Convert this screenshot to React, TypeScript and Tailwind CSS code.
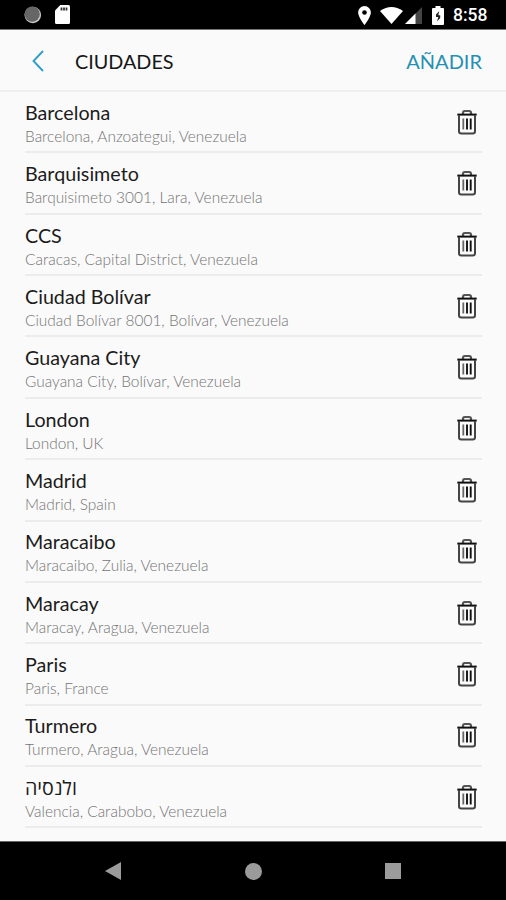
import React from 'react';

interface City {
  name: string;
  region: string;
}

const cities: City[] = [
  { name: 'Barcelona', region: 'Barcelona, Anzoategui, Venezuela' },
  { name: 'Barquisimeto', region: 'Barquisimeto 3001, Lara, Venezuela' },
  { name: 'CCS', region: 'Caracas, Capital District, Venezuela' },
  { name: 'Ciudad Bolívar', region: 'Ciudad Bolívar 8001, Bolívar, Venezuela' },
  { name: 'Guayana City', region: 'Guayana City, Bolívar, Venezuela' },
  { name: 'London', region: 'London, UK' },
  { name: 'Madrid', region: 'Madrid, Spain' },
  { name: 'Maracaibo', region: 'Maracaibo, Zulia, Venezuela' },
  { name: 'Maracay', region: 'Maracay, Aragua, Venezuela' },
  { name: 'Paris', region: 'Paris, France' },
  { name: 'Turmero', region: 'Turmero, Aragua, Venezuela' },
  { name: 'ולנסיה', region: 'Valencia, Carabobo, Venezuela' },
];

const TrashIcon: React.FC = () => (
  <svg width="20" height="26" viewBox="0 0 20 26" fill="none" stroke="#222">
    <path d="M6 5V3.800q0-1.800 1.800-1.800h4.400q1.800 0 1.800 1.800V5" strokeWidth="2.200" stroke="#555" />
    <path d="M0.300 5.600H19.700" strokeWidth="2" stroke="#111" />
    <path d="M2 6v16.200q0 2.300 2.300 2.300h11.400q2.300 0 2.300-2.300V6" strokeWidth="2" stroke="#444" />
    <path d="M6.300 9.500v11" strokeWidth="1.800" stroke="#666" />
    <path d="M10 9.500v11M13.700 9.500v11" strokeWidth="1.900" stroke="#111" />
  </svg>
);

const StatusBar: React.FC = () => (
  <div className="flex h-[30px] items-center justify-between border-b border-[#777] bg-black pl-6 pr-[18px]">
    <div className="flex items-center gap-[13px]">
      <svg width="18" height="18" viewBox="0 0 18 18">
        <circle cx="8.800" cy="9" r="8.300" fill="#c8c8c8" />
        <circle cx="8.200" cy="8.200" r="7.600" fill="#666" />
      </svg>
      <svg width="15" height="19" viewBox="0 0 15 19">
        <path d="M5.300 0h8.200Q15 0 15 1.500v16q0 1.500-1.500 1.500h-12Q0 19 0 17.500V5.500Z" fill="#fff" />
        <path d="M6.500 2.500v3M9 2.500v3M11.500 2.500v3" stroke="#333" strokeWidth="1.800" />
      </svg>
    </div>
    <div className="flex items-center pt-px">
      <svg width="13" height="19" viewBox="0 0 13 19">
        <path d="M6.500 0A6.400 6.400 0 0 0 .1 6.500C.1 11 6.500 19 6.500 19s6.400-8 6.400-12.500A6.400 6.400 0 0 0 6.500 0Z" fill="#fff" />
        <circle cx="6.500" cy="6.500" r="2.300" fill="#000" />
      </svg>
      <svg className="ml-[9px]" width="23" height="17" viewBox="0 0 23 17">
        <path d="M0 4Q11.500-4 23 4L11.500 17Z" fill="#fff" />
      </svg>
      <svg className="ml-[2px]" width="17" height="17" viewBox="0 0 17 17">
        <path d="M17 0V17H0Z" fill="#444" />
        <path d="M10.500 6.500V17H0Z" fill="#fff" />
      </svg>
      <svg className="ml-[10px]" width="12" height="19" viewBox="0 0 12 19">
        <path d="M3.500 2V0h5v2H11q1 0 1 1v15q0 1-1 1H1q-1 0-1-1V3q0-1 1-1Z" fill="#fff" />
        <path d="M7.300 5 4 8.500v2.500h2.300L5 15.500 8.200 12V9.300H6.300Z" fill="#222" />
      </svg>
      <span className="ml-[9px] mt-[2px] w-[35px] whitespace-nowrap font-['Roboto'] text-[17.5px] font-medium leading-none text-white">8:58</span>
    </div>
  </div>
);

const Header: React.FC = () => (
  <header className="flex h-[62px] items-center border-b-2 border-[#eeeeee] pl-8 pr-6 pt-[2px]">
    <svg width="12" height="22" viewBox="0 0 12 22" fill="none" stroke="#2fa0c4" strokeWidth="1.900">
      <path d="M11 1 1.500 11 11 21" />
    </svg>
    <h1 className="ml-[31px] pt-px text-[19.8px] text-[#161616]">CIUDADES</h1>
    <button className="ml-auto text-[20px] text-[#2590b3]">AÑADIR</button>
  </header>
);

const CityRow: React.FC<{ city: City }> = ({ city }) => (
  <li className="flex h-[61.37px] items-center justify-between border-b-2 border-[#ececec] pr-[5px]">
    <div className="pt-[5.4px]">
      <p className="text-[19.7px] leading-[24px] text-[#1c1c1c]">{city.name}</p>
      <p className="text-[15.45px] font-light leading-[23px] text-[#747474]">{city.region}</p>
    </div>
    <button aria-label={city.name}>
      <TrashIcon />
    </button>
  </li>
);

const NavBar: React.FC = () => (
  <nav className="flex h-[59px] items-center justify-between border-t border-[#666] bg-black pl-[105px] pr-[105px]">
    <svg width="16" height="18" viewBox="0 0 16 18" fill="#9b9b9b">
      <path d="M0 9 16 0v18Z" />
    </svg>
    <div className="h-[17px] w-[17px] rounded-full bg-[#9b9b9b]"></div>
    <div className="h-4 w-4 bg-[#9b9b9b]"></div>
  </nav>
);

const App: React.FC = () => (
  <div className="flex h-[900px] w-[506px] flex-col overflow-hidden bg-[#fafafa] font-['Lato','Open_Sans',sans-serif]">
    <StatusBar />
    <Header />
    <ul className="flex-1 pl-[25px] pr-[24px]">
      {cities.map((city) => (
        <CityRow key={city.name} city={city} />
      ))}
    </ul>
    <NavBar />
  </div>
);

export default App;
